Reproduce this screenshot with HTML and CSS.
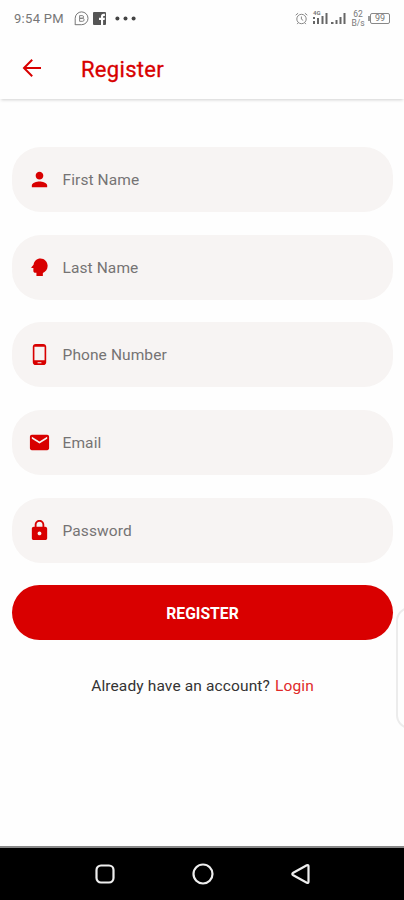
FILE: index.html
```html
<!DOCTYPE html>
<html lang="en">

<head>
	<meta charset="UTF-8" />
	<meta name="viewport" content="width=device-width, initial-scale=1.0" />
	<title>Register</title>
	<link rel="stylesheet" href="styles.css">
</head>

<body>
	<div class="status-bar">
		<div class="status-left">
			<span class="clock">9:54 PM</span>
			<svg class="icon-chat" width="15" height="15" viewBox="0 0 15 15" fill="none" stroke="#777">
				<path d="M1.2 14V7.3a6.4 6.4 0 1 1 6.4 6.4H1.2" />
				<path d="M5.6 4.6h2.6a1.3 1.3 0 0 1 0 2.7H5.6zM5.6 7.3h3a1.5 1.5 0 0 1 0 3h-3z" stroke-width=".9" />
			</svg>
			<svg class="icon-facebook" width="13" height="13" viewBox="0 0 13 13">
				<rect width="13" height="13" rx="1" fill="#555" />
				<path d="M8 13V8H6V5.8h2V4.4C8 2.7 9 1.8 10.6 1.8h1.3V4h-1c-.7 0-.8.3-.8.8v1h1.8L11.6 8h-1.5v5z" fill="#fff" />
			</svg>
			<svg class="icon-more" width="21" height="5" viewBox="0 0 21 5" fill="#444">
				<circle cx="2.4" cy="2.5" r="2" />
				<circle cx="10.5" cy="2.5" r="2" />
				<circle cx="18.6" cy="2.5" r="2" />
			</svg>
		</div>
		<div class="status-right">
			<svg class="icon-alarm" width="13" height="13" viewBox="0 0 13 13" fill="none" stroke="#888">
				<circle cx="6.5" cy="7" r="4.7" />
				<path d="M6.4 4.5v2.7l1.8 1.2M.7 3.2l2.4-2M12.3 3.2l-2.4-2M3.2 10.8l-1 1.3M9.8 10.8l1 1.3" />
			</svg>
			<div class="signal">
				<span class="signal-type">4G</span>
				<svg width="15" height="13" viewBox="0 0 15 13" fill="#666">
					<path d="M0 5h2v2H0zM0 9h2v3H0zM4 6h2v6H4z" />
					<path d="M8.5 4h2v8h-2zM12.5 1h2v11h-2z" />
				</svg>
			</div>
			<svg class="signal-two" width="15" height="13" viewBox="0 0 15 13" fill="#666">
				<path d="M0 10h2.5v2H0zM4.5 8h2v4h-2zM8.5 5h2v7h-2zM12.5 1h2v11h-2z" />
			</svg>
			<div class="speed"><span>62</span><span>B/s</span></div>
			<div class="battery">99</div>
		</div>
	</div>

	<header class="app-bar">
		<a class="back" href="#" aria-label="Back">
			<svg width="20" height="20" viewBox="0 0 20 20" fill="none" stroke="#d80000" stroke-width="2">
				<path d="M19 10H2.200M10.200 1.800L2 10l8.200 8.200" />
			</svg>
		</a>
		<h1>Register</h1>
	</header>

	<form class="register-form">
		<label class="field">
			<svg viewBox="0 0 24 24"><path d="M12 12c2.2 0 4-1.8 4-4s-1.8-4-4-4-4 1.8-4 4 1.8 4 4 4zm0 2c-2.7 0-8 1.3-8 4v2h16v-2c0-2.7-5.3-4-8-4z" /></svg>
			<input type="text" placeholder="First Name">
		</label>
		<label class="field">
			<svg viewBox="0 0 24 24"><path d="M13 2.500C9.200 2.500 6.200 5.300 5.800 9L3.600 11.700c-.3.400 0 .9.400.9h1.600v3c0 1.100.9 2 2 2h1.200v3.400h6.700v-3.200c3-1.200 5-3.900 5-7.500 0-4.300-3.300-7.800-7.500-7.800z" /></svg>
			<input type="text" placeholder="Last Name">
		</label>
		<label class="field">
			<svg viewBox="0 0 24 24"><path d="M16 1H8C6.300 1 5 2.300 5 4v16c0 1.700 1.300 3 3 3h8c1.700 0 3-1.300 3-3V4c0-1.700-1.300-3-3-3zm-2 20h-4v-1h4v1zm3.300-3H6.700V4h10.600v14z" /></svg>
			<input type="tel" placeholder="Phone Number">
		</label>
		<label class="field">
			<svg viewBox="0 0 24 24"><path d="M20 4H4c-1.100 0-2 .9-2 2v12c0 1.100.9 2 2 2h16c1.100 0 2-.9 2-2V6c0-1.100-.9-2-2-2zm0 4l-8 5-8-5V6l8 5 8-5v2z" /></svg>
			<input type="email" placeholder="Email">
		</label>
		<label class="field">
			<svg viewBox="0 0 24 24"><path d="M18 8h-1V6c0-2.800-2.200-5-5-5S7 3.200 7 6v2H6c-1.100 0-2 .9-2 2v10c0 1.100.9 2 2 2h12c1.100 0 2-.9 2-2V10c0-1.100-.9-2-2-2zm-6 9c-1.100 0-2-.9-2-2s.9-2 2-2 2 .9 2 2-.9 2-2 2zm3.100-9H8.900V6c0-1.700 1.400-3.100 3.100-3.100s3.100 1.400 3.100 3.100v2z" /></svg>
			<input type="password" placeholder="Password">
		</label>
		<button type="button" class="register-btn">REGISTER</button>
		<p class="login-line">Already have an account? <a href="#">Login</a></p>
	</form>

	<div class="edge-panel"></div>

	<nav class="nav-bar">
		<svg width="22" height="22" viewBox="0 0 22 22"><rect x="2.5" y="2.5" width="17" height="17" rx="4.5" /></svg>
		<svg width="22" height="22" viewBox="0 0 22 22"><circle cx="11" cy="11" r="9.5" /></svg>
		<svg width="22" height="22" viewBox="0 0 22 22"><path d="M16.8 2.2L3.3 9.8q-2 1.2 0 2.4l13.5 7.6q1.7.7 1.7-1V3.2q0-1.700-1.700-1z" /></svg>
	</nav>
</body>

</html>
```
FILE: styles.css
```css
* {
	box-sizing: border-box;
}
body, html {
	height: 100%;
	margin: 0;
}
body {
	position: relative;
	display: flex;
	flex-direction: column;
	overflow: hidden;
	background-color: #fefefe;
	font-family: Roboto, sans-serif;
}
.status-bar {
	display: flex;
	justify-content: space-between;
	height: 37px;
	padding: 0 14px 0 14px;
	color: #777;
}
.status-left, .status-right {
	display: flex;
	align-items: center;
}
.clock {
	width: 60px;
	font-size: 13px;
	letter-spacing: 0.3px;
	white-space: nowrap;
}
.icon-facebook {
	margin-left: 4px;
}
.icon-more {
	margin-left: 9px;
}
.icon-alarm {
	margin-right: 5px;
}
.signal {
	position: relative;
	height: 13px;
	margin-right: 3px;
}
.signal svg {
	display: block;
}
.signal-type {
	position: absolute;
	top: -2px;
	left: 0;
	font-size: 6px;
	line-height: 6px;
	font-weight: bold;
}
.signal-two {
	margin-right: 5px;
}
.speed {
	display: flex;
	flex-direction: column;
	width: 14px;
	margin-right: 3px;
	font-size: 8.5px;
	line-height: 9px;
	text-align: center;
}
.battery {
	position: relative;
	width: 20px;
	height: 11px;
	margin-left: 2px;
	border: 1px solid #888;
	border-radius: 2px;
	font-size: 9px;
	line-height: 9px;
	text-align: center;
}
.battery::before {
	content: "";
	position: absolute;
	top: 2px;
	left: -3px;
	width: 2px;
	height: 5px;
	background-color: #999;
}
.app-bar {
	display: flex;
	align-items: center;
	height: 62px;
	padding: 1px 22px 0;
	background-color: #fefefe;
	box-shadow: 0 2px 3px -1px rgba(0, 0, 0, 0.18);
}
.back {
	display: flex;
	width: 59px;
	padding-bottom: 1px;
}
.app-bar h1 {
	margin: 2px 0 0;
	color: #d80000;
	font-size: 22px;
	font-weight: 400;
	letter-spacing: 0.3px;
	-webkit-text-stroke: 0.3px #d80000;
}
.register-form {
	display: flex;
	flex: 1;
	flex-direction: column;
	gap: 22.7px;
	padding: 48px 11px 0 12px;
}
.field {
	display: flex;
	align-items: center;
	height: 65px;
	padding: 0 16px;
	border-radius: 29px;
	background-color: #f7f4f3;
}
.field svg {
	width: 23px;
	height: 23px;
	margin-right: 11.5px;
	fill: #d80000;
}
.field input {
	flex: 1;
	min-width: 0;
	padding: 1px 0 0;
	border: none;
	outline: none;
	background: none;
	font-family: inherit;
	font-size: 15.5px;
	letter-spacing: 0.1px;
}
.field input::placeholder {
	color: #757373;
}
.register-btn {
	height: 55px;
	padding: 2px 0 0;
	border: none;
	border-radius: 28px;
	background-color: #d90000;
	color: white;
	font-family: inherit;
	font-size: 15.7px;
	font-weight: bold;
}
.login-line {
	margin: 13px 0 0;
	color: #333;
	font-size: 15.5px;
	letter-spacing: 0.13px;
	line-height: 20px;
	text-align: center;
}
.login-line a {
	margin-left: 1px;
	color: #e02a2a;
	text-decoration: none;
}
.edge-panel {
	position: absolute;
	top: 607px;
	right: -20px;
	width: 28px;
	height: 122px;
	border: 2px solid #ececec;
	border-radius: 14px;
	background-color: #fefefe;
}
.nav-bar {
	display: flex;
	align-items: center;
	justify-content: center;
	gap: 76px;
	height: 54px;
	padding-left: 1px;
	border-top: 2px solid #888;
	background-color: #000;
}
.nav-bar svg {
	fill: none;
	stroke: #eee;
	stroke-width: 2.2;
}
```
